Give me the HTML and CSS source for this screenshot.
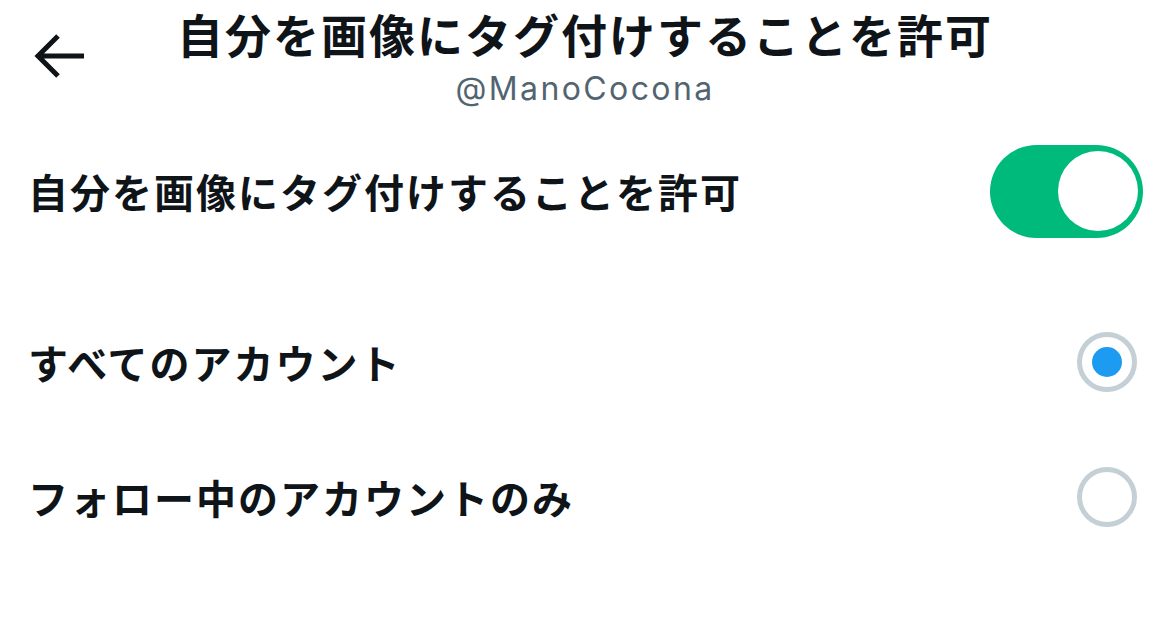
FILE: index.html
```html
<!DOCTYPE html>
<html lang="ja">
<head>
<meta charset="utf-8">
<link rel="stylesheet" href="styles.css">
</head>
<body>
<div class="page">
  <header class="header">
    <div class="back">
      <svg width="52" height="46" viewBox="0 0 52 46" aria-hidden="true">
        <path d="M50 23H5M24 3L4 23L24 43" fill="none" stroke="#0f1419" stroke-width="5"/>
      </svg>
    </div>
    <div class="titles">
      <h1 class="title">自分を画像にタグ付けすることを許可</h1>
      <div class="user">@ManoCocona</div>
    </div>
    <div class="spacer"></div>
  </header>

  <div class="row toggle-row">
    <span class="label">自分を画像にタグ付けすることを許可</span>
    <div class="toggle"><div class="knob"></div></div>
  </div>

  <div class="options">
    <div class="row option">
      <span class="label">すべてのアカウント</span>
      <div class="radio checked"><div class="dot"></div></div>
    </div>
    <div class="row option">
      <span class="label">フォロー中のアカウントのみ</span>
      <div class="radio"></div>
    </div>
  </div>
</div>
</body>
</html>
```

FILE: styles.css
```css
html, body {
  margin: 0;
  padding: 0;
  background: #ffffff;
}

.page {
  width: 1170px;
  height: 629px;
  font-family: "Noto Sans CJK JP", "Noto Sans", sans-serif;
  color: #0f1419;
  overflow: hidden;
}

.header {
  display: grid;
  grid-template-columns: 120px 1fr 120px;
  height: 118px;
}

.back {
  display: flex;
  justify-content: flex-start;
  align-items: flex-start;
  padding: 33px 0 0 34px;
}

.titles {
  display: flex;
  flex-direction: column;
  align-items: center;
}

.title {
  margin: 0;
  font-size: 46px;
  font-weight: 700;
  line-height: normal;
  padding-top: 0;
  letter-spacing: 2px;
  white-space: nowrap;
}

.user {
  font-family: Inter, "Liberation Sans", sans-serif;
  font-size: 32px;
  line-height: 38px;
  color: #536471;
  letter-spacing: 2.4px;
  margin-top: 4px;
}

.row {
  display: flex;
  align-items: center;
  justify-content: space-between;
  padding: 0 27px 0 28px;
}

.label {
  font-size: 40px;
  font-weight: 700;
  letter-spacing: 2px;
  white-space: nowrap;
}

.toggle-row {
  height: 146px;
}

.toggle {
  width: 153px;
  height: 93px;
  border-radius: 47px;
  background: #00ba7c;
  display: flex;
  align-items: center;
  justify-content: flex-end;
  padding-right: 5px;
  box-sizing: border-box;
}

.knob {
  width: 80px;
  height: 80px;
  border-radius: 50%;
  background: #ffffff;
}

.options {
  padding-top: 30px;
}

.option {
  height: 135px;
}

.radio {
  width: 60px;
  height: 60px;
  box-sizing: border-box;
  border: 5px solid #c4cfd6;
  border-radius: 50%;
  display: flex;
  align-items: center;
  justify-content: center;
  margin-right: 6px;
}

.dot {
  width: 30px;
  height: 30px;
  border-radius: 50%;
  background: #1d9bf0;
}
```
